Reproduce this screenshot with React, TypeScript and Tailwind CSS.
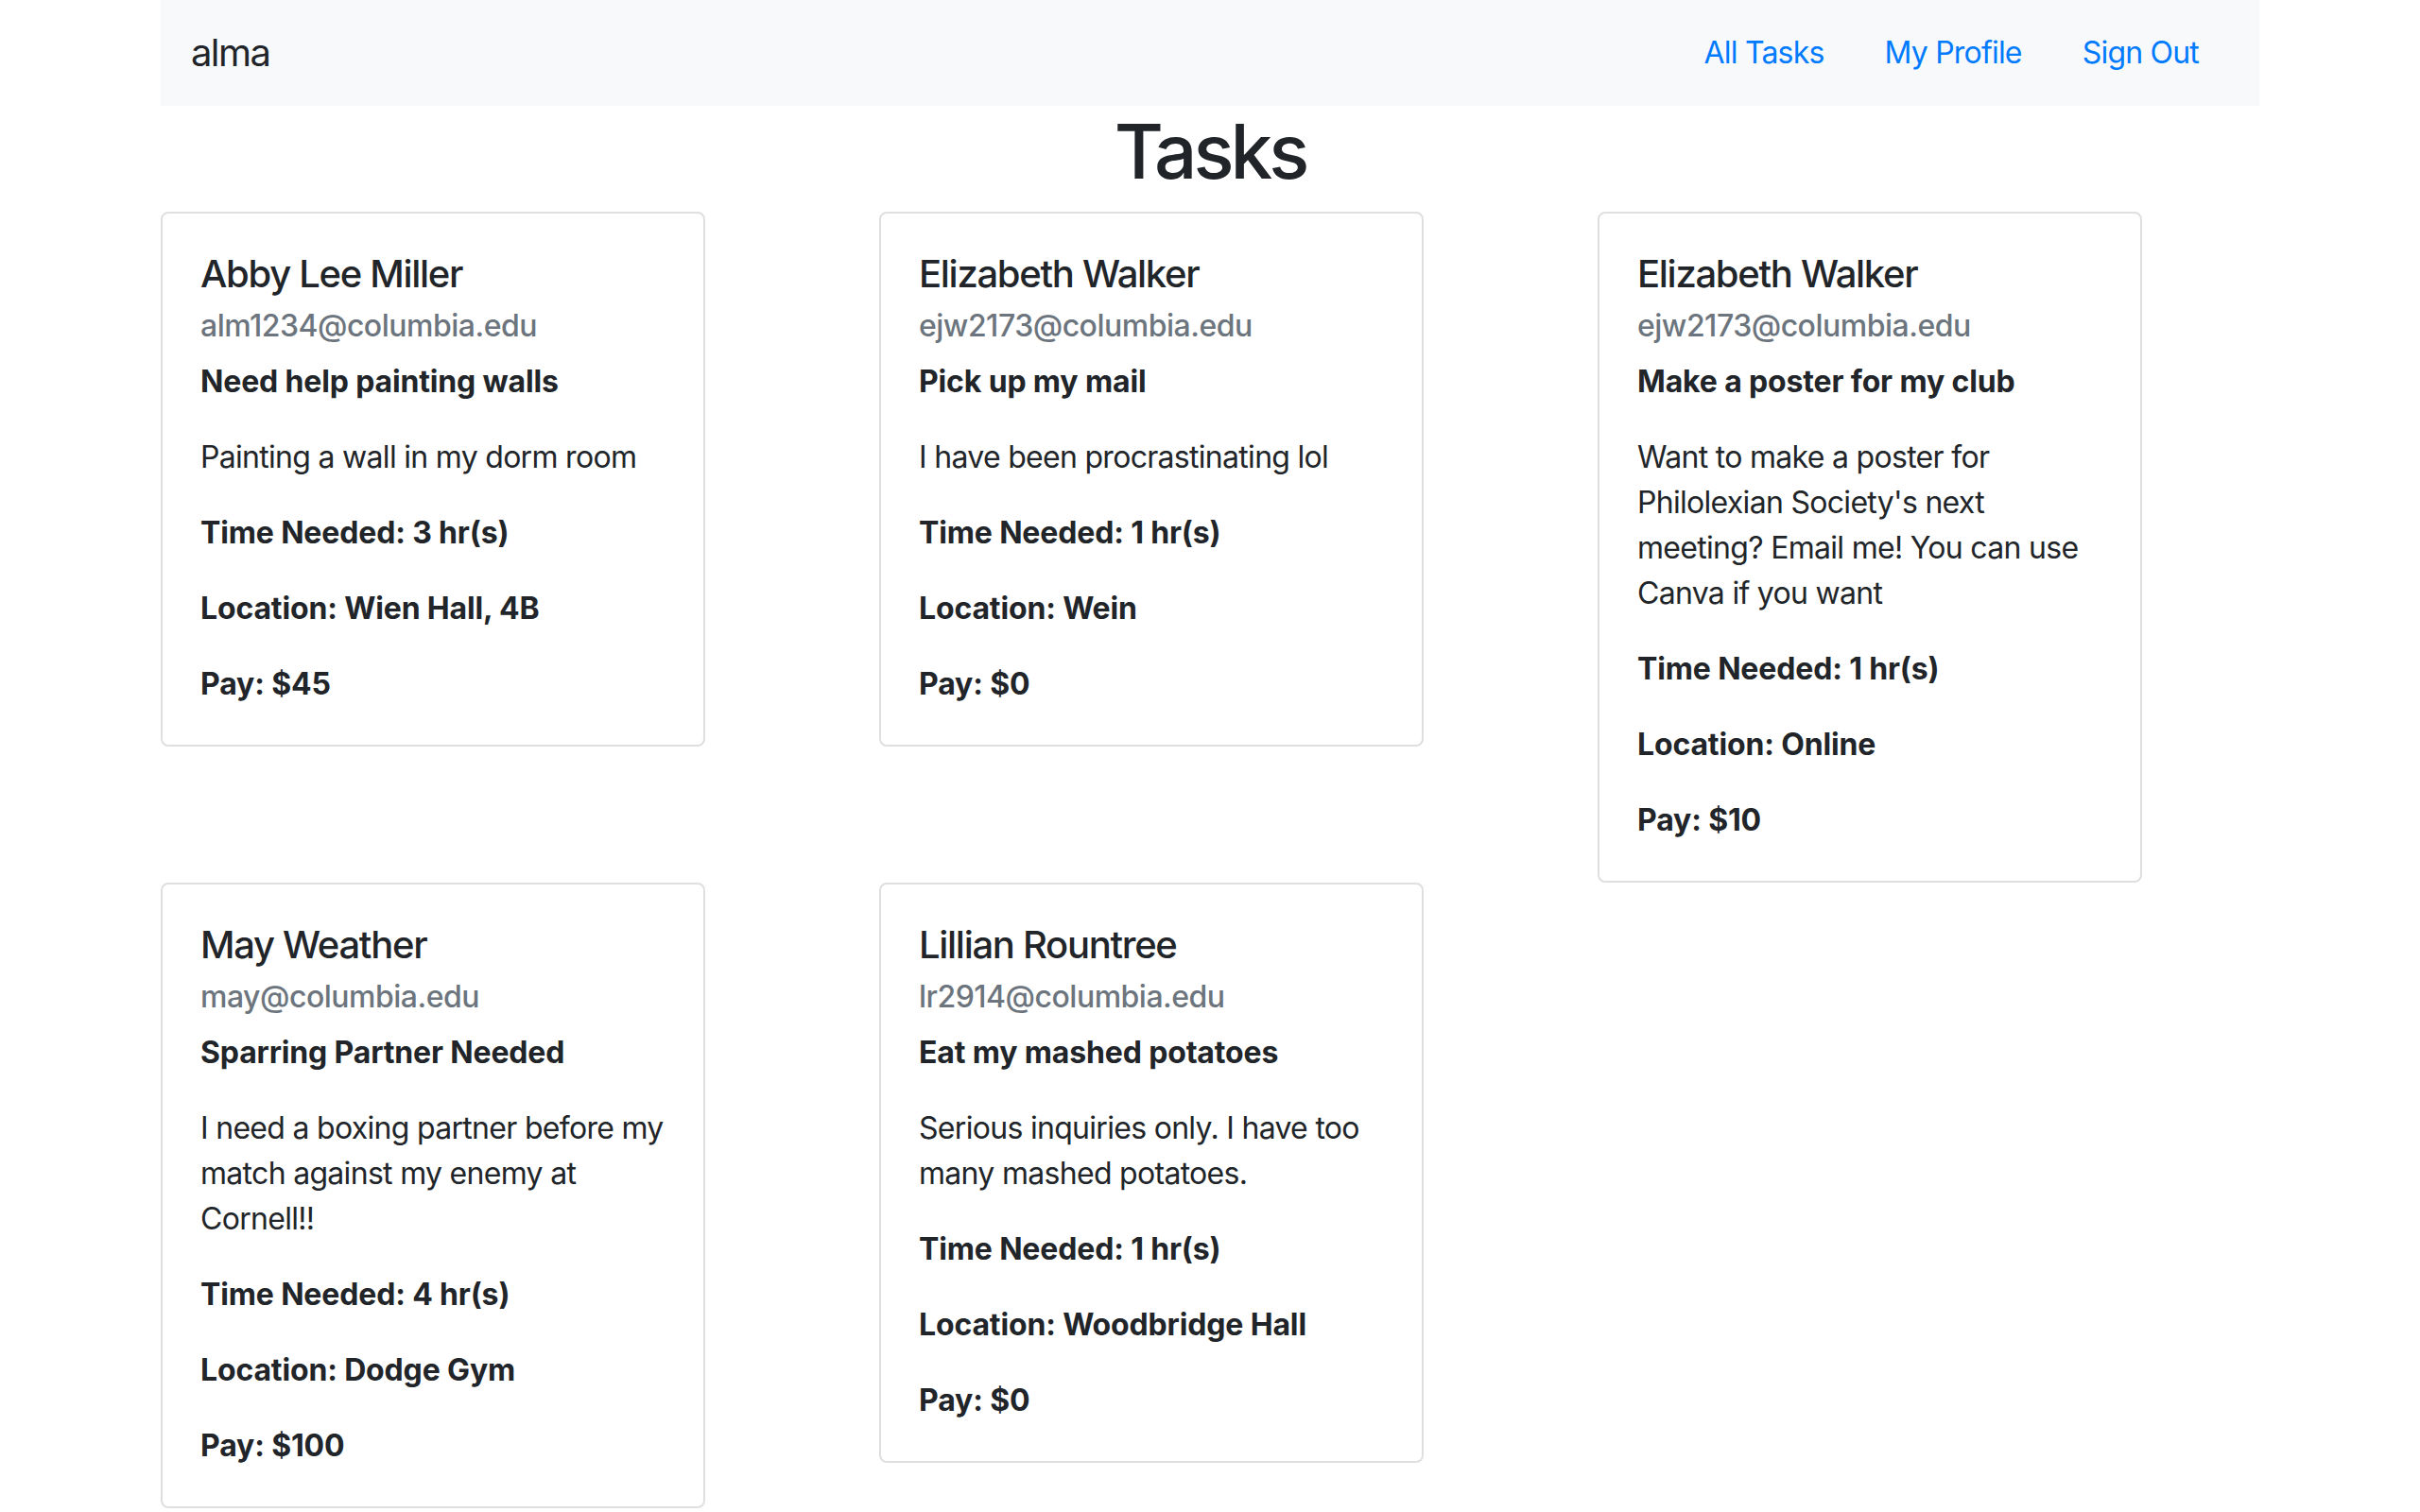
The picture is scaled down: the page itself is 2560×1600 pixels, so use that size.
import React from 'react';

type Task = {
  name: string;
  email: string;
  title: string;
  description: string;
  hours: number;
  location: string;
  pay: number;
};

const tasks: Task[] = [
  { name: 'Abby Lee Miller', email: 'alm1234@columbia.edu', title: 'Need help painting walls', description: 'Painting a wall in my dorm room', hours: 3, location: 'Wien Hall, 4B', pay: 45 },
  { name: 'Elizabeth Walker', email: 'ejw2173@columbia.edu', title: 'Pick up my mail', description: 'I have been procrastinating lol', hours: 1, location: 'Wein', pay: 0 },
  { name: 'Elizabeth Walker', email: 'ejw2173@columbia.edu', title: 'Make a poster for my club', description: "Want to make a poster for Philolexian Society's next meeting? Email me! You can use Canva if you want", hours: 1, location: 'Online', pay: 10 },
  { name: 'May Weather', email: 'may@columbia.edu', title: 'Sparring Partner Needed', description: 'I need a boxing partner before my match against my enemy at Cornell!!', hours: 4, location: 'Dodge Gym', pay: 100 },
  { name: 'Lillian Rountree', email: 'lr2914@columbia.edu', title: 'Eat my mashed potatoes', description: 'Serious inquiries only. I have too many mashed potatoes.', hours: 1, location: 'Woodbridge Hall', pay: 0 },
];

const TaskCard: React.FC<{ task: Task }> = ({ task }) => (
  <div className="w-[576px] rounded-[8px] border-2 border-[#dfdfdf] bg-white p-[40px]">
    <h5 className="text-[40px] leading-[48px] font-medium tracking-[-1.3px] mb-[12px]">{task.name}</h5>
    <h6 className="text-[32px] leading-[38px] font-medium tracking-[-0.5px] text-[#6c757d] mb-4">{task.email}</h6>
    <p className="text-[32px] leading-[48px] font-bold tracking-[-0.15px] mb-8">{task.title}</p>
    <p className="text-[32px] leading-[48px] tracking-[-0.7px] mb-8">{task.description}</p>
    <p className="text-[32px] leading-[48px] font-bold tracking-[-0.15px] mb-8">Time Needed: {task.hours} hr(s)</p>
    <p className="text-[32px] leading-[48px] font-bold tracking-[-0.15px] mb-8">Location: {task.location}</p>
    <p className="text-[32px] leading-[48px] font-bold tracking-[-0.15px]">Pay: ${task.pay}</p>
  </div>
);

export default function App() {
  return (
    <div className="min-h-screen bg-white text-[#212529] font-['Inter',sans-serif]">
      <div className="w-[2220px] mx-auto">
        <nav className="h-[112px] bg-[#f8f9fa] pl-8 pr-16 flex items-center justify-between">
          <span className="text-[40px] leading-[48px] tracking-[-1.6px]">alma</span>
          <div className="flex items-center">
            {['All Tasks', 'My Profile', 'Sign Out'].map((l, i) => (
              <a key={i} href="#" className={`text-[32px] leading-[48px] tracking-[-0.8px] text-[#007bff] ${i === 0 ? '' : 'ml-16'}`}>{l}</a>
            ))}
          </div>
        </nav>

        <h1 className="text-center text-[80px] leading-[96px] font-medium tracking-[-4px] mb-4">Tasks</h1>

        <div className="grid grid-cols-[repeat(3,760px)] items-start">
          {tasks.map((t, i) => (
            <TaskCard key={i} task={t} />
          ))}
        </div>
      </div>
    </div>
  );
}
